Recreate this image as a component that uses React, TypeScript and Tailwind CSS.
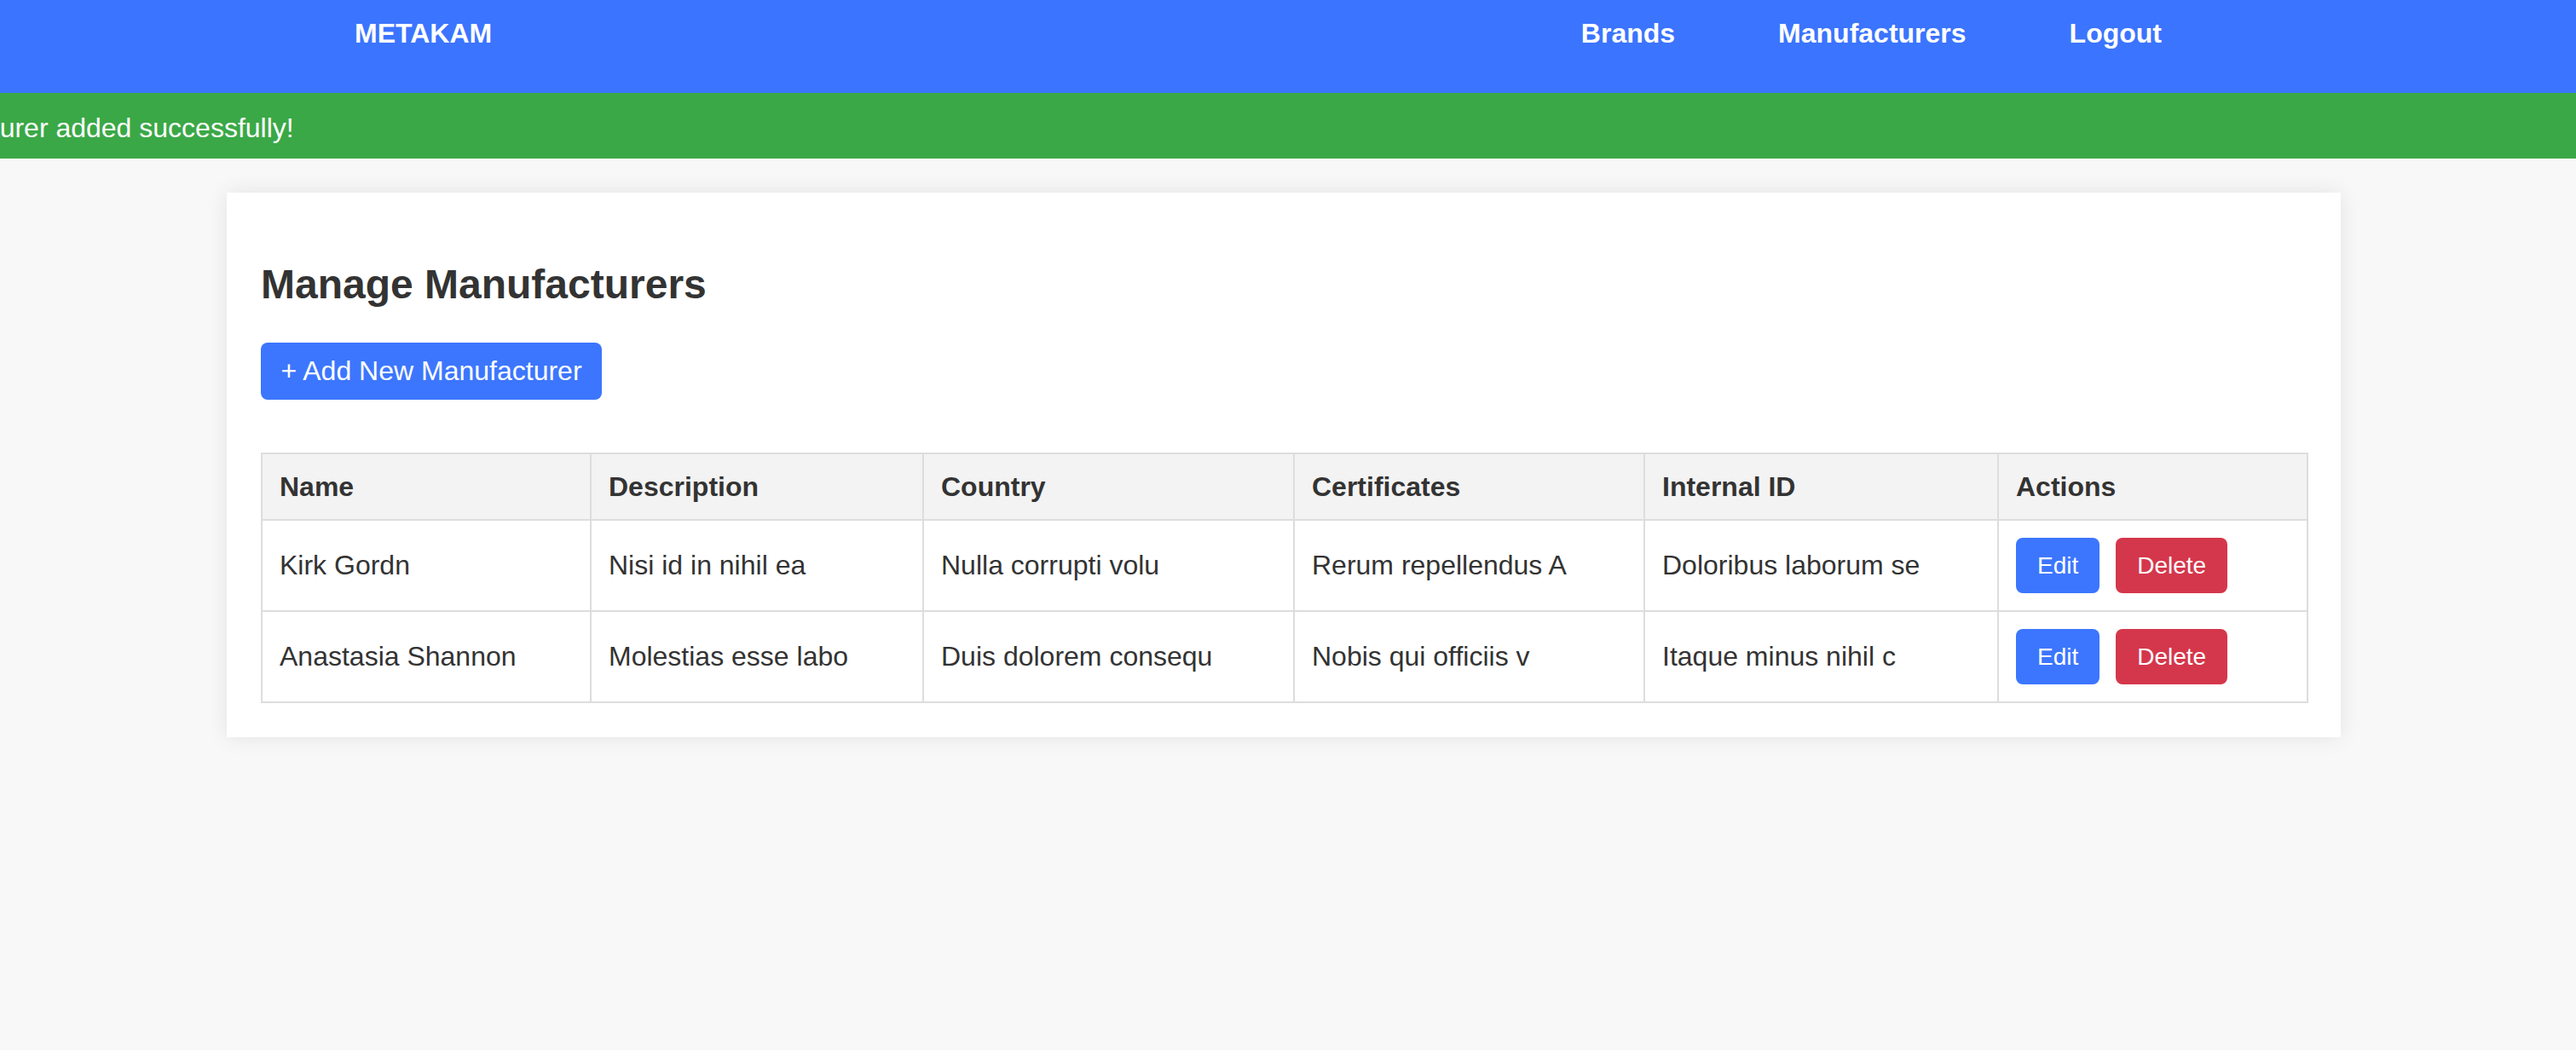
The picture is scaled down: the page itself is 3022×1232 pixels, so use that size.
import React from "react";

const rows = [
  ["Kirk Gordn", "Nisi id in nihil ea", "Nulla corrupti volu", "Rerum repellendus A", "Doloribus laborum se"],
  ["Anastasia Shannon", "Molestias esse labo", "Duis dolorem consequ", "Nobis qui officiis v", "Itaque minus nihil c"],
];

const headers = ["Name", "Description", "Country", "Certificates", "Internal ID", "Actions"];
const widths = ["w-[386px]", "w-[390px]", "w-[435px]", "w-[411px]", "w-[415px]", "w-[363px]"];

export default function App() {
  return (
    <div className="min-h-screen bg-[#f8f8f8] text-[#333] font-['Liberation_Sans',Arial,sans-serif]">
      <nav className="h-[109px] bg-[#3b74ff] flex items-start pt-[21px] pl-[416px] pr-[486px] text-white font-bold text-[32px] leading-[37px]">
        <div>METAKAM</div>
        <ul className="ml-auto flex gap-[121px]">
          <li>Brands</li>
          <li>Manufacturers</li>
          <li>Logout</li>
        </ul>
      </nav>
      <div className="h-[77px] bg-[#3aa846] flex items-start pt-[23px] overflow-hidden text-white text-[32px] leading-[37px] whitespace-nowrap">
        <span className="-ml-[132px]">Manufacturer added successfully!</span>
      </div>
      <div className="pt-[40px] pb-[40px]">
        <div className="ml-[266px] w-[2480px] bg-white p-[40px] shadow-[0_0_24px_rgba(0,0,0,0.09)]">
          <h2 className="mt-[40px] mb-[41px] text-[48px] font-bold leading-[55px] text-[#333]">Manage Manufacturers</h2>
          <button className="h-[67px] w-[400px] rounded-[8px] bg-[#3c76fe] text-white text-[32px] leading-[37px]">
            + Add New Manufacturer
          </button>
          <table className="mt-[62px] w-[2400px] table-fixed border-collapse text-[32px]">
            <colgroup>
              {widths.map((w, i) => (
                <col key={i} className={w} />
              ))}
            </colgroup>
            <thead>
              <tr className="bg-[#f3f3f3]">
                {headers.map((h) => (
                  <th key={h} className="border-2 border-[#dddddd] px-[20px] py-[20px] text-left font-bold leading-[36px] text-[#333]">
                    {h}
                  </th>
                ))}
              </tr>
            </thead>
            <tbody>
              {rows.map((r, ri) => (
                <tr key={ri}>
                  {r.map((c, ci) => (
                    <td key={ci} className="border-2 border-[#dddddd] px-[20px] py-[20px] leading-[37px] align-middle text-[#333]">
                      {c}
                    </td>
                  ))}
                  <td className="border-2 border-[#dddddd] px-[20px] py-[20px] align-middle">
                    <div className="flex gap-[19px]">
                      <button className="h-[65px] px-[25px] rounded-[8px] bg-[#3c76fe] text-white text-[28px] leading-[32px]">Edit</button>
                      <button className="h-[65px] px-[25px] rounded-[8px] bg-[#d4374b] text-white text-[28px] leading-[32px]">Delete</button>
                    </div>
                  </td>
                </tr>
              ))}
            </tbody>
          </table>
        </div>
      </div>
    </div>
  );
}
